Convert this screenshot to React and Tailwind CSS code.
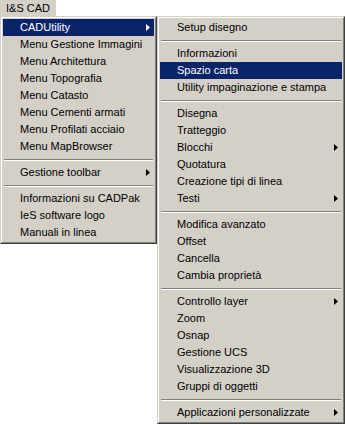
import React from 'react';

const mainItems = [
  { label: 'CADUtility', sub: true, active: true },
  { label: 'Menu Gestione Immagini' },
  { label: 'Menu Architettura' },
  { label: 'Menu Topografia' },
  { label: 'Menu Catasto' },
  { label: 'Menu Cementi armati' },
  { label: 'Menu Profilati acciaio' },
  { label: 'Menu MapBrowser' },
  { sep: true },
  { label: 'Gestione toolbar', sub: true },
  { sep: true },
  { label: 'Informazioni su CADPak' },
  { label: 'IeS software logo' },
  { label: 'Manuali in linea' },
];

const subItems = [
  { label: 'Setup disegno' },
  { sep: true },
  { label: 'Informazioni' },
  { label: 'Spazio carta', active: true },
  { label: 'Utility impaginazione e stampa' },
  { sep: true },
  { label: 'Disegna' },
  { label: 'Tratteggio' },
  { label: 'Blocchi', sub: true },
  { label: 'Quotatura' },
  { label: 'Creazione tipi di linea' },
  { label: 'Testi', sub: true },
  { sep: true },
  { label: 'Modifica avanzato' },
  { label: 'Offset' },
  { label: 'Cancella' },
  { label: 'Cambia proprietà' },
  { sep: true },
  { label: 'Controllo layer', sub: true },
  { label: 'Zoom' },
  { label: 'Osnap' },
  { label: 'Gestione UCS' },
  { label: 'Visualizzazione 3D' },
  { label: 'Gruppi di oggetti' },
  { sep: true },
  { label: 'Applicazioni personalizzate', sub: true },
];

const Arrow = ({ active }) => (
  <svg width="4" height="7" viewBox="0 0 4 7" className="shrink-0">
    <path d="M0 0 L4 3.5 L0 7 Z" fill={active ? '#ffffff' : '#000000'} />
  </svg>
);

const MenuPanel = ({ items, width }) => (
  <div className={`${width} border border-t-[#d4d0c8] border-l-[#d4d0c8] border-b-[#404040] border-r-[#404040] bg-[#d4d0c8]`}>
    <div className="border border-t-white border-l-white border-b-[#808080] border-r-[#808080] p-px">
      {items.map((item, i) =>
        item.sep ? (
          <div key={i} className="h-[9px] flex flex-col justify-center px-px">
            <div className="h-px bg-[#808080]" />
            <div className="h-px bg-white" />
          </div>
        ) : (
          <div
            key={i}
            className={`h-[17px] flex items-center pl-[17px] pr-[4px] ${item.active ? 'bg-[#0a246a] text-white' : 'text-black'}`}
          >
            <span className="flex-1 leading-none whitespace-nowrap">{item.label}</span>
            {item.sub && <Arrow active={item.active} />}
          </div>
        )
      )}
    </div>
  </div>
);

const App = () => {
  return (
    <div
      className="w-[345px] h-[425px] bg-white overflow-hidden text-[11px]"
      style={{ fontFamily: '"Liberation Sans", Arial, sans-serif' }}
    >
      <div className="flex h-[16px]">
        <div className="w-[56px] bg-[#d4d0c8] flex items-center justify-center text-black leading-none">
          I&amp;S CAD
        </div>
      </div>
      <div className="flex items-start">
        <MenuPanel items={mainItems} width="w-[157px]" />
        <MenuPanel items={subItems} width="w-[188px]" />
      </div>
    </div>
  );
};

export default App;
